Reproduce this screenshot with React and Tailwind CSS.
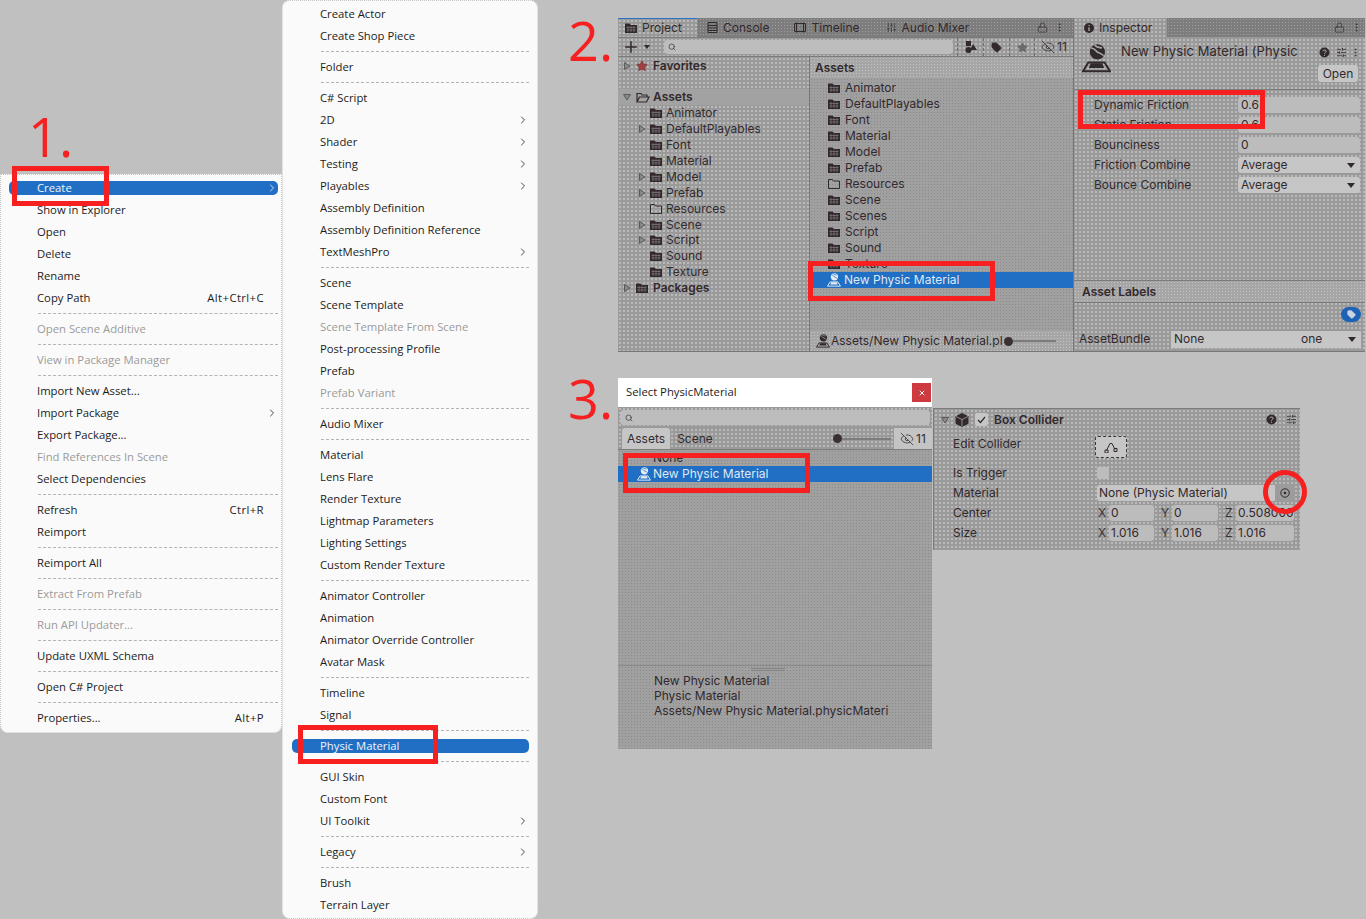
import { ChevronRight, EyeOff, Lock, MoreVertical, Plus, Search, SlidersHorizontal, SlidersVertical, Star, Tag, X } from "lucide-react";

const menuFont = "font-['Open_Sans','Noto_Sans',sans-serif]";
const unityFont = "font-['Inter','Noto_Sans',sans-serif]";
const ink = "#32292d";
const dotsLight = "bg-[#9a9a9a] bg-[radial-gradient(#bcbcbc_0.7px,transparent_0.85px)] bg-[length:4px_4px]";
const dotsDark = "bg-[#a0a0a0] bg-[radial-gradient(#8a8a8a_0.7px,transparent_0.85px)] bg-[length:3px_3px]";
const dotsBand = "bg-[#a6a6a6] bg-[radial-gradient(#c4c4c4_0.7px,transparent_0.85px)] bg-[length:3px_3px]";
const dotsTab = "bg-[#7d7d7d] bg-[radial-gradient(#a0a0a0_0.7px,transparent_0.8px)] bg-[length:3px_3px]";
const dotsCombo = "bg-[#a6a6a6] bg-[radial-gradient(#c8c8c8_0.7px,transparent_0.8px)] bg-[length:2px_2px]";
const dotsRow = "bg-[#8c8c8c] bg-[radial-gradient(#a4a4a4_0.7px,transparent_0.8px)] bg-[length:2px_2px]";

const firstMenu = [
  { label: "Create", sub: true, active: true },
  { label: "Show in Explorer" },
  { label: "Open" },
  { label: "Delete" },
  { label: "Rename" },
  { label: "Copy Path", shortcut: "Alt+Ctrl+C" },
  "-",
  { label: "Open Scene Additive", disabled: true },
  "-",
  { label: "View in Package Manager", disabled: true },
  "-",
  { label: "Import New Asset..." },
  { label: "Import Package", sub: true },
  { label: "Export Package..." },
  { label: "Find References In Scene", disabled: true },
  { label: "Select Dependencies" },
  "-",
  { label: "Refresh", shortcut: "Ctrl+R" },
  { label: "Reimport" },
  "-",
  { label: "Reimport All" },
  "-",
  { label: "Extract From Prefab", disabled: true },
  "-",
  { label: "Run API Updater...", disabled: true },
  "-",
  { label: "Update UXML Schema" },
  "-",
  { label: "Open C# Project" },
  "-",
  { label: "Properties...", shortcut: "Alt+P" },
];

const secondMenu = [
  { label: "Create Actor" },
  { label: "Create Shop Piece" },
  "-",
  { label: "Folder" },
  "-",
  { label: "C# Script" },
  { label: "2D", sub: true },
  { label: "Shader", sub: true },
  { label: "Testing", sub: true },
  { label: "Playables", sub: true },
  { label: "Assembly Definition" },
  { label: "Assembly Definition Reference" },
  { label: "TextMeshPro", sub: true },
  "-",
  { label: "Scene" },
  { label: "Scene Template" },
  { label: "Scene Template From Scene", disabled: true },
  { label: "Post-processing Profile" },
  { label: "Prefab" },
  { label: "Prefab Variant", disabled: true },
  "-",
  { label: "Audio Mixer" },
  "-",
  { label: "Material" },
  { label: "Lens Flare" },
  { label: "Render Texture" },
  { label: "Lightmap Parameters" },
  { label: "Lighting Settings" },
  { label: "Custom Render Texture" },
  "-",
  { label: "Animator Controller" },
  { label: "Animation" },
  { label: "Animator Override Controller" },
  { label: "Avatar Mask" },
  "-",
  { label: "Timeline" },
  { label: "Signal" },
  "-",
  { label: "Physic Material", active: true },
  "-",
  { label: "GUI Skin" },
  { label: "Custom Font" },
  { label: "UI Toolkit", sub: true },
  "-",
  { label: "Legacy", sub: true },
  "-",
  { label: "Brush" },
  { label: "Terrain Layer" },
];

const treeItems = [
  { label: "Animator" },
  { label: "DefaultPlayables", arrow: true },
  { label: "Font" },
  { label: "Material" },
  { label: "Model", arrow: true },
  { label: "Prefab", arrow: true },
  { label: "Resources", empty: true },
  { label: "Scene", arrow: true },
  { label: "Script", arrow: true, tight: true },
  { label: "Sound" },
  { label: "Texture" },
];

const listItems = ["Animator", "DefaultPlayables", "Font", "Material", "Model", "Prefab", "Resources", "Scene", "Scenes", "Script", "Sound", "Texture"];

function Menu({ items, className }) {
  return (
    <div className={`absolute bg-[#fafafa] border border-dotted border-[#c9c9c9] text-[11.3px] text-[#1c1c1c] pt-[2px] ${menuFont} ${className}`}>
      {items.map((item, i) =>
        item === "-" ? (
          <div key={i} className="h-[9px] flex items-center pl-[29px]">
            <div className="w-full border-t border-dashed border-[#b4b4b4]" />
          </div>
        ) : (
          <div key={item.label} className="h-[22px] flex items-center">
            <div
              className={`w-full h-[14px] flex items-center justify-between pl-[28px] rounded-[5px] ${item.active ? "bg-[#216fc4] text-[#eef4fb]" : ""} ${item.disabled ? "text-[#9a9a9a]" : ""}`}
            >
              <span className="whitespace-nowrap">{item.label}</span>
              {item.shortcut && <span className="pr-[14px] tracking-[0.4px]">{item.shortcut}</span>}
              {item.sub && <ChevronRight size={12} strokeWidth={1.6} />}
            </div>
          </div>
        )
      )}
    </div>
  );
}

function RedBox({ className }) {
  return <div className={`absolute border-[5px] border-[#f5201f] ${className}`} />;
}

function Numeral({ children, className }) {
  return <div className={`absolute text-[#f5201f] text-[54px] leading-none font-['Open_Sans',sans-serif] ${className}`}>{children}</div>;
}

function FolderIcon({ empty, open, className = "" }) {
  if (open) {
    return (
      <svg width="14" height="11" viewBox="0 0 14 11" className={className}>
        <path d="M1 10V1.5h4l1 1.5h5v2M1 10l2.5-5H13l-2.5 5z" fill="none" stroke={ink} strokeWidth="1.2" />
      </svg>
    );
  }
  if (empty) {
    return (
      <svg width="12" height="10" viewBox="0 0 12 10" className={className}>
        <path d="M.5 9.5v-9h4l1 1.5h6v7.5z" fill="none" stroke={ink} />
      </svg>
    );
  }
  return (
    <svg width="12" height="10" viewBox="0 0 12 10" className={className}>
      <path d="M0 10V.5h4.5L6 2h6v8z" fill={ink} />
      <path d="M1.5 4.5h9M1.5 7h9M3 3v6M6 3v6M9 3v6" stroke="#8d8689" strokeWidth=".6" />
    </svg>
  );
}

function Foldout({ down, className = "" }) {
  return (
    <svg width="8" height="8" viewBox="0 0 8 8" className={className}>
      {down ? (
        <path d="M.5 1.5h7L4 7z" fill="#888" stroke="#5c5c5c" />
      ) : (
        <path d="M1.5.5v7L7 4z" fill="#888" stroke="#5c5c5c" />
      )}
    </svg>
  );
}

// ball with a seam sitting on a plate
function PhysicIcon({ size = 16, color = ink, seam = "#a8a8a8", className = "" }) {
  return (
    <svg width={size} height={size} viewBox="0 0 16 16" className={className}>
      <circle cx="8.5" cy="4.4" r="4.2" fill={color} />
      <path d="M5 2.2c2.6 0 2.4 2.2 4.2 2.6s2 1.6 2.8 1.4M7 .6c1.2 1.6 2.6 1.2 4 1.6" stroke={seam} strokeWidth=".9" fill="none" />
      <path d="M3.5 10.2h9L15.4 15H.6z" fill="none" stroke={color} strokeWidth="1.1" />
      <path d="M4.8 10.6h6.4l1 2.6H3.8z" fill={color} />
    </svg>
  );
}

function HelpDot({ className = "" }) {
  return (
    <svg width="11" height="11" viewBox="0 0 11 11" className={className}>
      <circle cx="5.5" cy="5.5" r="5" fill={ink} />
      <path d="M3.8 4.2c.2-1.6 3.4-1.6 3.4.1 0 1.2-1.7 1.1-1.7 2.3M5.5 7.8v1" stroke="#b5b5b5" strokeWidth="1" fill="none" />
    </svg>
  );
}

function Slider({ className = "" }) {
  return (
    <div className={`flex items-center ${className}`}>
      <div className="w-[9px] h-[9px] rounded-full bg-[#3a3034] shrink-0" />
      <div className="flex-1 h-[2px] bg-[#7c7c7c]" />
    </div>
  );
}

function HiddenCount({ className = "" }) {
  return (
    <div className={`flex items-center justify-center gap-[2px] ${className}`}>
      <EyeOff size={14} strokeWidth={1.3} />
      <span>11</span>
    </div>
  );
}

function Tab({ icon, label, className = "" }) {
  return (
    <div className={`h-full flex items-center gap-[5px] ${className}`}>
      {icon}
      <span>{label}</span>
    </div>
  );
}

function ProjectPanel() {
  return (
    <div className="w-[455px] flex flex-col">
      <div className={`h-[19px] flex items-stretch ${dotsTab}`}>
        <div className={`w-[79px] border-t border-[#2a72c8] ${dotsLight}`}>
          <Tab className="pl-[7px]" icon={<FolderIcon />} label="Project" />
        </div>
        <Tab
          className="pl-[10px]"
          icon={
            <svg width="11" height="11" viewBox="0 0 11 11">
              <path d="M1 .5h9v10H1zM1 3.5h9M1 6h9M1 8.5h9" fill="none" stroke={ink} />
            </svg>
          }
          label="Console"
        />
        <Tab
          className="pl-[25px]"
          icon={
            <svg width="12" height="11" viewBox="0 0 12 11">
              <path d="M.5 1.5h11v8H.5zM2.5.5v10M9.5.5v10" fill="none" stroke={ink} />
            </svg>
          }
          label="Timeline"
        />
        <Tab className="pl-[26px]" icon={<SlidersVertical size={11} strokeWidth={1.5} />} label="Audio Mixer" />
        <div className="flex-1 flex items-center justify-end gap-[6px] pr-[8px]">
          <Lock size={11} strokeWidth={1.4} />
          <MoreVertical size={11} strokeWidth={1.6} />
        </div>
      </div>
      <div className={`h-[20px] flex items-center border-y border-[#7b7b7b] ${dotsLight}`}>
        <Plus size={18} strokeWidth={2} className="ml-[4px]" />
        <svg width="8" height="5" viewBox="0 0 8 5" className="ml-[3px]">
          <path d="M1 0h6L4 4z" fill={ink} />
        </svg>
        <div className="ml-[13px] w-[289px] h-[14px] rounded-[4px] bg-[#bdbdbd] flex items-center pl-[4px]">
          <Search size={8} strokeWidth={2} />
        </div>
        <div className="h-full flex-1 flex items-stretch ml-[4px]">
          <div className="w-[26px] flex items-center justify-center border-l border-dashed border-[#6f6f6f]">
            <svg width="12" height="12" viewBox="0 0 12 12">
              <path d="M1 0h5v5H1z" fill={ink} />
              <path d="M8 3l4 6H5z" fill={ink} />
              <circle cx="3.5" cy="9" r="3" fill={ink} />
            </svg>
          </div>
          <div className="w-[26px] flex items-center justify-center border-l border-dashed border-[#6f6f6f]">
            <Tag size={11} fill={ink} strokeWidth={1.4} />
          </div>
          <div className="w-[25px] flex items-center justify-center border-l border-dashed border-[#6f6f6f]">
            <Star size={11} fill="#6a6a6a" stroke="#6a6a6a" />
          </div>
          <HiddenCount className="flex-1 border-l border-dashed border-[#6f6f6f]" />
        </div>
      </div>
      <div className="flex-1 flex">
        <div className={`w-[192px] border-r border-[#777] pt-[1px] ${dotsLight}`}>
          <div className="h-4 flex items-center font-semibold">
            <Foldout className="ml-[5px]" />
            <Star size={12} stroke="#7d3030" fill="#a04040" strokeWidth={1.5} className="ml-[5px]" />
            <span className="ml-[5px]">Favorites</span>
          </div>
          <div className={`h-4 mt-[15px] flex items-center font-semibold ${dotsRow}`}>
            <Foldout down className="ml-[5px]" />
            <FolderIcon open className="ml-[5px]" />
            <span className="ml-[3px]">Assets</span>
          </div>
          {treeItems.map((item) => (
            <div key={item.label} className={`h-4 flex items-center pl-[32px] relative ${item.tight ? "-mt-px" : ""}`}>
              {item.arrow && <Foldout className="absolute left-[20px] top-[4px]" />}
              <FolderIcon empty={item.empty} />
              <span className="ml-[4px]">{item.label}</span>
            </div>
          ))}
          <div className="h-4 flex items-center font-semibold">
            <Foldout className="ml-[5px]" />
            <FolderIcon className="ml-[5px]" />
            <span className="ml-[5px]">Packages</span>
          </div>
        </div>
        <div className={`flex-1 flex flex-col ${dotsDark}`}>
          <div className={`h-[21px] flex items-center pl-[5px] font-semibold ${dotsBand}`}>Assets</div>
          <div className="flex-1 overflow-hidden">
            <div className="h-[2px]" />
            {listItems.map((name) => (
              <div key={name} className="h-4 flex items-center pl-[18px]">
                <FolderIcon empty={name === "Resources"} />
                <span className="ml-[5px]">{name}</span>
              </div>
            ))}
            <div className="h-4 ml-[2px] flex items-center pl-[15px] bg-[#216fc4] text-[#dfe8f3]">
              <PhysicIcon size={14} color="#e6edf5" seam="#216fc4" />
              <span className="ml-[3px]">New Physic Material</span>
            </div>
          </div>
          <div className={`h-[20px] flex items-center pl-[6px] ${dotsBand}`}>
            <PhysicIcon size={14} />
            <span className="ml-[1px] w-[175px] overflow-hidden whitespace-nowrap">Assets/New Physic Material.pl</span>
            <Slider className="w-[52px] -ml-[2px]" />
          </div>
        </div>
      </div>
    </div>
  );
}

function FieldRow({ label, value, combo }) {
  return (
    <div className="h-[16px] mb-[4px] flex items-center pl-[20px] pr-[5px]">
      <span className="w-[144px]">{label}</span>
      <div className={`flex-1 h-[16px] rounded-[3px] flex items-center justify-between px-[3px] ${combo ? dotsCombo : "bg-[#bcbcbc]"}`}>
        <span>{value}</span>
        {combo && (
          <svg width="8" height="5" viewBox="0 0 8 5" className="mr-[2px]">
            <path d="M0 0h8L4 5z" fill={ink} />
          </svg>
        )}
      </div>
    </div>
  );
}

function InspectorPanel() {
  return (
    <div className={`flex-1 flex flex-col border-l border-[#777] ${dotsLight}`}>
      <div className={`h-[19px] flex items-stretch ${dotsTab}`}>
        <div className={`w-[93px] h-full ${dotsLight}`}>
          <Tab
            className="pl-[10px]"
            icon={
              <svg width="10" height="10" viewBox="0 0 10 10">
                <circle cx="5" cy="5" r="5" fill={ink} />
                <path d="M5 2v1M5 4.2V8" stroke="#b5b5b5" strokeWidth="1.2" />
              </svg>
            }
            label="Inspector"
          />
        </div>
        <div className="flex-1 flex items-center justify-end gap-[6px] pr-[3px]">
          <Lock size={11} strokeWidth={1.4} />
          <MoreVertical size={11} strokeWidth={1.6} />
        </div>
      </div>
      <div className="h-[53px] flex border-b border-[#7b7b7b] pl-[8px] pr-[4px] pt-[7px]">
        <PhysicIcon size={29} />
        <div className="flex-1 ml-[10px]">
          <div className="flex items-center justify-between h-[16px]">
            <span className="text-[13px] whitespace-nowrap tracking-[0.1px]">New Physic Material (Physic</span>
            <div className="flex items-center gap-[6px]">
              <HelpDot />
              <SlidersHorizontal size={11} strokeWidth={1.7} />
              <MoreVertical size={11} strokeWidth={1.7} className="-ml-[3px]" />
            </div>
          </div>
          <div className="flex justify-end mt-[5px] pr-[3px]">
            <div className={`w-[40px] h-[17px] rounded-[3px] flex items-center justify-center ${dotsCombo}`}>Open</div>
          </div>
        </div>
      </div>
      <div className="h-[191px] pt-[7px] border-b border-[#7b7b7b]">
        <FieldRow label="Dynamic Friction" value="0.6" />
        <FieldRow label="Static Friction" value="0.6" />
        <FieldRow label="Bounciness" value="0" />
        <FieldRow label="Friction Combine" value="Average" combo />
        <FieldRow label="Bounce Combine" value="Average" combo />
      </div>
      <div className={`h-[22px] flex items-center pl-[8px] font-semibold border-b border-[#7b7b7b] ${dotsBand}`}>Asset Labels</div>
      <div className="h-[22px] flex items-center justify-end pr-[4px]">
        <div className="w-[20px] h-[15px] rounded-full bg-[#1d62b4] flex items-center justify-center">
          <Tag size={9} fill="#c9d6e4" stroke="#c9d6e4" />
        </div>
      </div>
      <div className="flex-1 flex items-center pl-[5px] pr-[4px] pt-[2px]">
        <span className="w-[92px]">AssetBundle</span>
        <div className={`flex-1 h-[17px] flex items-center px-[3px] ${dotsCombo}`}>
          <span className="w-[127px]">None</span>
          <span className="flex-1">one</span>
          <svg width="8" height="5" viewBox="0 0 8 5" className="mr-[2px]">
            <path d="M0 0h8L4 5z" fill={ink} />
          </svg>
        </div>
      </div>
    </div>
  );
}

function SelectWindow() {
  return (
    <div className={`absolute left-[618px] top-[378px] w-[314px] h-[371px] flex flex-col text-[12px] text-[#32292d] ${unityFont} ${dotsDark}`}>
      <div className={`h-[29px] bg-white flex items-center justify-between pl-[8px] pr-[1px] text-[11.3px] text-[#1c1c1c] ${menuFont}`}>
        <span>Select PhysicMaterial</span>
        <div className="w-[19px] h-[19px] bg-[#cf3a40] flex items-center justify-center">
          <X size={8} strokeWidth={3} color="#ffffff" />
        </div>
      </div>
      <div className={`h-[21px] flex items-center px-[2px] ${dotsLight}`}>
        <div className="flex-1 h-[15px] rounded-[4px] bg-[#bdbdbd] flex items-center pl-[5px]">
          <Search size={8} strokeWidth={2} />
        </div>
      </div>
      <div className={`h-[21px] flex items-stretch ${dotsLight}`}>
        <div className={`ml-[4px] w-[48px] flex items-center justify-center rounded-t-[3px] ${dotsCombo}`}>Assets</div>
        <div className="w-[48px] ml-[1px] flex items-center justify-center">Scene</div>
        <Slider className="ml-[114px] w-[58px]" />
        <HiddenCount className="ml-auto w-[38px] bg-[#c4c4c4]" />
      </div>
      <div className="flex-1 flex flex-col overflow-hidden border-t border-[#7b7b7b]">
        <div className="h-[16px] pl-[35px] flex items-center">None</div>
        <div className="h-[16px] pl-[19px] flex items-center bg-[#216fc4] text-[#dfe8f3]">
          <PhysicIcon size={14} color="#e6edf5" seam="#216fc4" />
          <span className="ml-[2px]">New Physic Material</span>
        </div>
      </div>
      <div className="h-[84px] border-t border-[#8a8a8a] pl-[36px] pt-[7px] leading-[15px] relative">
        <div className="absolute left-[133px] top-[2px] w-[34px] h-[3px] border-y border-[#838383]" />
        <div>New Physic Material</div>
        <div>Physic Material</div>
        <div className="whitespace-nowrap">Assets/New Physic Material.physicMateri</div>
      </div>
    </div>
  );
}

function VectorRow({ label, values }) {
  return (
    <div className="h-[16px] mb-[4px] flex items-center pl-[19px]">
      <span className="w-[145px]">{label}</span>
      {values.map(([axis, v], i) => (
        <div key={axis} className={`flex items-center ${i === 0 ? "" : "ml-[7px]"}`}>
          <span className="w-[11px] text-[#3b3236]">{axis}</span>
          <div className={`${i === 2 ? "w-[58px]" : i === 1 ? "w-[46px]" : "w-[45px]"} h-[16px] rounded-[3px] bg-[#bcbcbc] pl-[2px] flex items-center whitespace-nowrap`}>{v}</div>
        </div>
      ))}
    </div>
  );
}

function BoxCollider() {
  return (
    <div className={`absolute left-[933px] top-[408px] w-[367px] h-[142px] border-t border-l border-[#7b7b7b] text-[12px] text-[#32292d] ${unityFont} ${dotsLight}`}>
      <div className="h-[21px] flex items-center">
        <Foldout down className="ml-[7px]" />
        <svg width="14" height="14" viewBox="0 0 14 14" className="ml-[6px]">
          <path d="M7 0l6.5 3.2v7.6L7 14 .5 10.8V3.2z" fill={ink} />
          <path d="M1 3.5l6 3 6-3M7 6.5V13.5" stroke="#a8a8a8" strokeWidth=".8" fill="none" />
        </svg>
        <div className="ml-[6px] w-[13px] h-[13px] rounded-[2px] bg-[#c6c6c6] flex items-center justify-center">
          <svg width="9" height="8" viewBox="0 0 9 8">
            <path d="M1 4l2.5 2.5L8 1" stroke={ink} strokeWidth="1.2" fill="none" />
          </svg>
        </div>
        <span className="ml-[6px] font-semibold">Box Collider</span>
        <HelpDot className="ml-auto" />
        <SlidersHorizontal size={11} strokeWidth={1.7} className="ml-[9px] mr-[3px]" />
      </div>
      <div className="h-[28px] pt-[6px] flex items-start pl-[19px]">
        <span className="w-[142px] h-4 leading-4">Edit Collider</span>
        <div className={`w-[32px] h-[22px] rounded-[3px] border border-dashed border-[#3d3438] flex items-center justify-center ${dotsCombo}`}>
          <svg width="14" height="12" viewBox="0 0 14 12">
            <path d="M2.5 9.5L6 2.5h2l3 6" fill="none" stroke={ink} />
            <path d="M1 9h3v3H1zM10 7.5h3v3h-3z" fill="none" stroke={ink} />
          </svg>
        </div>
      </div>
      <div className="h-[16px] mt-[7px] mb-[4px] flex items-center pl-[19px]">
        <span className="w-[144px]">Is Trigger</span>
        <div className="w-[12px] h-[12px] rounded-[2px] bg-[#bcbcbc]" />
      </div>
      <div className="h-[16px] mb-[4px] flex items-center pl-[19px]">
        <span className="w-[144px]">Material</span>
        <div className={`w-[198px] h-[16px] rounded-[3px] flex items-center pl-[2px] ${dotsCombo}`}>
          <span className="flex-1">None (Physic Material)</span>
          <div className="w-[20px] h-full bg-[#9c9c9c] flex items-center justify-center">
            <svg width="10" height="10" viewBox="0 0 10 10">
              <circle cx="5" cy="5" r="4.2" fill="none" stroke={ink} />
              <circle cx="5" cy="5" r="1.3" fill={ink} />
            </svg>
          </div>
        </div>
      </div>
      <VectorRow label="Center" values={[["X", "0"], ["Y", "0"], ["Z", "0.508000"]]} />
      <VectorRow label="Size" values={[["X", "1.016"], ["Y", "1.016"], ["Z", "1.016"]]} />
    </div>
  );
}

export default function App() {
  return (
    <div className="relative w-[1366px] h-[919px] overflow-hidden bg-[#c0c0c0]">
      <Menu items={firstMenu} className="left-0 top-[174px] w-[282px] h-[559px] pl-[8px] pr-[3px] rounded-b-lg" />
      <Menu items={secondMenu} className="left-[282px] top-0 w-[256px] h-[919px] pl-[9px] pr-[8px] rounded-lg" />

      <Numeral className="left-[28px] top-[109px]">1.</Numeral>
      <Numeral className="left-[568px] top-[13px]">2.</Numeral>
      <Numeral className="left-[568px] top-[371px]">3.</Numeral>

      <div className={`absolute left-[618px] top-[18px] w-[747px] h-[334px] flex border-b border-[#777] text-[12px] text-[#32292d] ${unityFont}`}>
        <ProjectPanel />
        <InspectorPanel />
      </div>

      <SelectWindow />
      <BoxCollider />

      <RedBox className="left-[12px] top-[166px] w-[97px] h-[40px]" />
      <RedBox className="left-[298px] top-[725px] w-[140px] h-[39px]" />
      <RedBox className="left-[808px] top-[261px] w-[187px] h-[40px]" />
      <RedBox className="left-[1078px] top-[90px] w-[187px] h-[39px]" />
      <RedBox className="left-[623px] top-[453px] w-[187px] h-[40px]" />
      <div className="absolute left-[1263px] top-[470px] w-[44px] h-[44px] rounded-full border-[5px] border-[#f5201f]" />
    </div>
  );
}
